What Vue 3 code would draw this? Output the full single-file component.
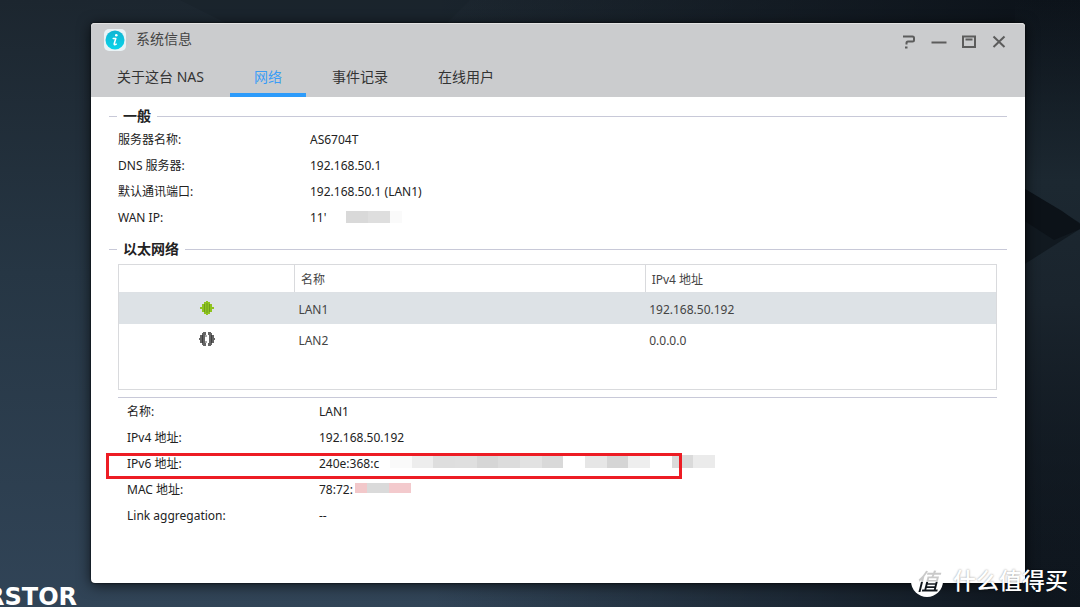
<script setup>
import { ref } from 'vue'

const tabs = ['关于这台 NAS', '网络', '事件记录', '在线用户']
const active = ref(1)
const selected = ref(0)

const general = [
  { label: '服务器名称:', value: 'AS6704T' },
  { label: 'DNS 服务器:', value: '192.168.50.1' },
  { label: '默认通讯端口:', value: '192.168.50.1 (LAN1)' },
  { label: 'WAN IP:', value: "11'", kind: 'wan', mask: ['#d9d9d9', '#dedede', '#fafafa'] },
]

const ports = [
  { name: 'LAN1', ip: '192.168.50.192', up: true },
  { name: 'LAN2', ip: '0.0.0.0', up: false },
]

const details = [
  { label: '名称:', value: 'LAN1' },
  { label: 'IPv4 地址:', value: '192.168.50.192' },
  {
    label: 'IPv6 地址:',
    value: '240e:368:c',
    kind: 'ipv6',
    marked: true,
    mask: [
      '#fafafa', '#ededed', '#dedede', '#dfdfdf', '#d6d6d6', '#dcdcdc', '#e2e2e2', '#d9d9d9',
      '#ffffff', '#e6e6e6', '#d5d5d5', '#eeeeee', '#ffffff', '#dadada', '#ebebeb',
    ],
  },
  { label: 'MAC 地址:', value: '78:72:', kind: 'mac', mask: ['#f2c8ca', '#dadada', '#f3cacd'] },
  { label: 'Link aggregation:', value: '--' },
]
</script>

<template>
  <div class="desktop">
    <svg class="wallpaper" viewBox="0 0 1080 607" preserveAspectRatio="none" aria-hidden="true">
      <defs>
        <linearGradient id="glow" x1="0" y1="0" x2="0" y2="1">
          <stop offset="0" stop-color="#1c2831" stop-opacity="0" />
          <stop offset=".3" stop-color="#1c2831" />
          <stop offset=".5" stop-color="#1a242d" />
          <stop offset="1" stop-color="#121a22" stop-opacity="0" />
        </linearGradient>
      </defs>
      <path d="M180 0H470L440 30H240Z" fill="#17212a" opacity=".5" />
      <rect x="1015" y="0" width="65" height="607" fill="url(#glow)" />
      <path d="M1020 186L1080 223V229L1020 267Z" fill="#111920" />
      <path d="M1020 186L1062 211L1080 224V229L1054 240L1020 218Z" fill="#0c1218" />
    </svg>
    <div class="brand">RSTOR</div>

    <main class="window">
      <header class="head">
        <div class="titlebar">
          <svg class="app-icon" viewBox="0 0 22 22" aria-hidden="true">
            <defs>
              <linearGradient id="disc" x1="0" y1="0" x2="0" y2="1">
                <stop offset="0" stop-color="#12b4d2" />
                <stop offset="1" stop-color="#08d4ea" />
              </linearGradient>
            </defs>
            <rect width="22" height="22" rx="5" fill="#e9f3f6" />
            <circle cx="11" cy="11" r="9.5" fill="url(#disc)" />
            <circle cx="12.3" cy="6.3" r="1.3" fill="#fff" />
            <path d="M9.2 9.5H11.8L10.2 14.8Q10 16.4 12.3 15.2" fill="none" stroke="#fff" stroke-width="1.5" stroke-linejoin="round" stroke-linecap="round" />
          </svg>
          <h1 class="title">系统信息</h1>
          <div class="controls">
            <button type="button" aria-label="帮助">
              <svg viewBox="0 0 16 16"><path d="M2 2.5H11.5Q13 2.5 13 4V6Q13 7.5 11.5 7.5H7Q5.5 7.5 5.5 9V10.5M4 13.5H6.5" /></svg>
            </button>
            <button type="button" aria-label="最小化">
              <svg viewBox="0 0 16 16"><path d="M.5 8.5H15.5" /></svg>
            </button>
            <button type="button" aria-label="最大化">
              <svg viewBox="0 0 16 16"><path d="M2 2.5H14V13H2ZM4.5 5.5H11.5" /></svg>
            </button>
            <button type="button" aria-label="关闭">
              <svg viewBox="0 0 16 16"><path d="M2.5 2.5L13.5 13M13.5 2.5L2.5 13" /></svg>
            </button>
          </div>
        </div>
        <nav class="tabs" role="tablist">
          <button
            v-for="(tab, i) in tabs"
            :key="tab"
            type="button"
            role="tab"
            class="tab"
            :class="{ active: i === active }"
            :aria-selected="i === active"
            @click="active = i"
          >{{ tab }}</button>
        </nav>
      </header>

      <div class="body">
        <h2 class="legend">一般</h2>
        <dl class="rows">
          <div v-for="r in general" :key="r.label" class="row">
            <dt>{{ r.label }}</dt>
            <dd>
              <span class="value" :class="r.kind">{{ r.value }}</span>
              <span v-if="r.mask" class="mosaic" :class="r.kind">
                <i v-for="(c, i) in r.mask" :key="i" :style="{ background: c }"></i>
              </span>
            </dd>
          </div>
        </dl>

        <h2 class="legend second">以太网络</h2>
        <div class="grid">
          <table>
            <thead>
              <tr>
                <th class="status" aria-label="状态"></th>
                <th class="name">名称</th>
                <th>IPv4 地址</th>
              </tr>
            </thead>
            <tbody>
              <tr v-for="(p, i) in ports" :key="p.name" :class="{ selected: i === selected }" @click="selected = i">
                <td class="status">
                  <svg v-if="p.up" class="plug" viewBox="0 0 16 16">
                    <path d="M1 7H3V4H5V2H7V1H9V2H11V4H13V7H15V9H13V12H11V14H9V15H7V14H5V12H3V9H1Z" fill="#8fc31f" />
                    <path d="M5.5 4V12M8 3V13M10.5 4V12" stroke="#6d9f1a" fill="none" />
                  </svg>
                  <svg v-else class="plug" viewBox="0 0 16 16">
                    <path d="M0 7H1V4H3V2H4V1H7V4H6V12H7V15H4V14H3V12H1V9H0ZM9 1H12V2H13V4H15V7H16V9H15V12H13V14H12V15H9V12H10V4H9Z" fill="#656565" />
                    <path d="M3.5 4V12M12.5 4V12" stroke="#3f3f3f" fill="none" />
                    <path d="M6 5H8M6 11H8" stroke="#555" fill="none" />
                  </svg>
                </td>
                <td>{{ p.name }}</td>
                <td>{{ p.ip }}</td>
              </tr>
            </tbody>
          </table>
        </div>

        <dl class="rows details">
          <div v-for="r in details" :key="r.label" class="row" :class="{ marked: r.marked }">
            <dt>{{ r.label }}</dt>
            <dd>
              <span class="value" :class="r.kind">{{ r.value }}</span>
              <span v-if="r.mask" class="mosaic" :class="r.kind">
                <i v-for="(c, i) in r.mask" :key="i" :style="{ background: c }"></i>
              </span>
            </dd>
          </div>
        </dl>
      </div>
    </main>

    <div class="watermark">
      <span class="seal"><b>值</b></span>
      <span class="mark-text">什么值得买</span>
    </div>
  </div>
</template>

<style>
body {
  margin: 0;
}
</style>

<style scoped>
.desktop {
  position: relative;
  box-sizing: border-box;
  display: flex;
  min-height: 100vh;
  padding: 23px 55px 24px 91px;
  overflow: hidden;
  font-family: "Noto Sans", "Noto Sans CJK SC", sans-serif;
  font-size: 12px;
  color: #222;
  background:
    linear-gradient(90deg, transparent 40%, rgba(11, 17, 24, 0.9) 96%),
    linear-gradient(180deg, #1c262f 0%, #263644 45%, #314457 100%);
}
.wallpaper {
  position: absolute;
  inset: 0;
  width: 100%;
  height: 100%;
}
.brand {
  position: absolute;
  left: -14px;
  bottom: -4px;
  font: bold 24px/28px "DejaVu Sans", sans-serif;
  color: #fff;
}
.window {
  position: relative;
  flex: 1;
  min-width: 0;
  border-radius: 4px;
  background: #fff;
  box-shadow: 0 0 2px #000, 0 2px 14px rgba(0, 0, 0, 0.7);
}
.head {
  border-radius: 4px 4px 0 0;
  background: #cbccce;
  box-shadow: inset 0 1px #e2e2e2;
}
.titlebar {
  display: flex;
  align-items: center;
  height: 34px;
  padding: 0 18px 0 13px;
}
.app-icon {
  width: 22px;
  height: 22px;
}
.title {
  margin: 0 0 0 10px;
  padding-bottom: 2px;
  font-size: 14px;
  font-weight: 400;
  line-height: 20px;
  color: #444;
}
.controls {
  display: flex;
  gap: 14px;
  margin-left: auto;
  padding-top: 4px;
}
.controls button {
  width: 16px;
  height: 16px;
  padding: 0;
  border: 0;
  background: none;
}
.controls svg {
  display: block;
  fill: none;
  stroke: #5c5c5c;
  stroke-width: 2;
}
.tabs {
  display: flex;
  gap: 2px;
  padding-left: 2px;
}
.tab {
  height: 40px;
  padding: 3px 24px 0;
  border: 0;
  border-bottom: 4px solid transparent;
  background: none;
  font: inherit;
  font-size: 14px;
  line-height: 20px;
  color: #333;
}
.tab.active {
  border-bottom-color: #2d9bfa;
  color: #3b9df5;
}
.body {
  padding: 9px 18px 20px;
}
.legend {
  display: flex;
  align-items: center;
  gap: 6px;
  margin: 0;
  font-size: 14px;
  font-weight: 700;
  line-height: 20px;
}
.legend::before,
.legend::after {
  content: "";
  width: 8px;
  height: 1px;
  background: #c8c9d8;
}
.legend::after {
  flex: 1;
}
.legend.second {
  margin-top: 9px;
}
.rows {
  margin: 0 0 0 9px;
}
.row {
  position: relative;
  display: flex;
  align-items: center;
  height: 26px;
}
dt {
  width: 192px;
}
dd {
  display: flex;
  align-items: center;
  margin: 0;
}
.value {
  white-space: nowrap;
}
.value.wan {
  width: 36px;
}
.value.ipv6 {
  width: 71px;
}
.value.mac {
  width: 36px;
}
.mosaic {
  display: flex;
}
.mosaic i {
  width: 22px;
  height: 12px;
}
.mosaic.wan i:last-child {
  width: 12px;
}
.mosaic.ipv6 {
  width: 325px;
  padding-bottom: 3px;
}
.mosaic.ipv6 i {
  flex: 1;
  height: 13px;
}
.mosaic.mac i {
  height: 10px;
  margin-bottom: 2px;
}
.mosaic.mac i:first-child {
  width: 12px;
}
.grid {
  box-sizing: border-box;
  min-height: 126px;
  margin: 5px 10px 0 9px;
  border: 1px solid #d9dadd;
}
table {
  width: 100%;
  border-collapse: collapse;
  table-layout: fixed;
  color: #444;
}
th {
  height: 27px;
  padding: 0 6px;
  border-bottom: 1px solid #dde1e5;
  font-weight: 400;
  text-align: left;
}
th + th {
  border-left: 1px solid #d9dadd;
}
td {
  height: 31px;
  padding: 2px 4px 0;
  box-sizing: border-box;
}
.status {
  width: 20%;
  box-sizing: border-box;
  text-align: center;
}
td.status {
  padding: 0;
}
.name {
  width: 353px;
  width: calc(40% + 2px);
  box-sizing: border-box;
}
.selected {
  background: #dde2e6;
}
.plug {
  display: block;
  width: 16px;
  height: 16px;
  margin: 0 auto;
}
.details {
  margin: 7px 10px 0 9px;
  padding-left: 9px;
  border-top: 1px solid #c8c9d8;
}
.marked::after {
  content: "";
  position: absolute;
  top: 3px;
  left: -21px;
  box-sizing: border-box;
  width: 576px;
  height: 26px;
  border: 3px solid #ed1c24;
}
.watermark {
  position: absolute;
  right: 12px;
  bottom: 10px;
  display: flex;
  align-items: flex-start;
  gap: 10px;
  font-family: "Noto Sans CJK SC", sans-serif;
}
.seal {
  width: 32px;
  height: 32px;
  border-radius: 50%;
  background: #fff;
  text-align: center;
}
.seal b {
  display: block;
  font-size: 23px;
  font-style: italic;
  font-weight: 500;
  line-height: 30px;
  color: transparent;
  background: linear-gradient(180deg, #c9c9c9 58%, #10161c 58%);
  background-clip: text;
}
.mark-text {
  font-size: 23px;
  font-weight: 500;
  line-height: 28px;
  color: #fff;
  text-shadow: 0 0 2px rgba(0, 0, 0, 0.45);
}
</style>
